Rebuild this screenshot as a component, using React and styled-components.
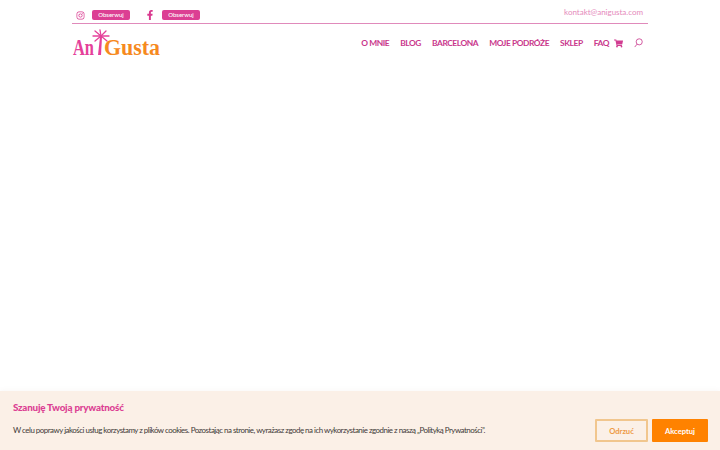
import React from "react";
import styled, { createGlobalStyle } from "styled-components";
import { FaInstagram, FaFacebookF, FaShoppingCart } from "react-icons/fa";

const Global = createGlobalStyle`
  html, body { margin: 0; padding: 0; background: #fff; }
  body { font-family: "Lato", "Liberation Sans", sans-serif; }
  * { box-sizing: border-box; }
`;

const Page = styled.div`
  width: 720px;
  height: 450px;
  display: flex;
  flex-direction: column;
  justify-content: space-between;
  overflow: hidden;
`;
const Header = styled.header`
  width: 576px;
  margin: 0 auto;
`;
const TopBar = styled.div`
  height: 24px;
  border-bottom: 1px solid #e08abb;
  display: flex;
  align-items: center;
  padding: 0 5px 0 0;
`;
const SocialIcon = styled.span`
  width: 16px;
  height: 16px;
  margin-top: 7px;
  display: flex;
  align-items: center;
  justify-content: center;
  color: #d9398f;
  font-size: ${(p) => p.$size}px;
`;
const Follow = styled.span`
  width: 38px;
  height: 10px;
  margin: 7px ${(p) => p.$right}px 0 ${(p) => p.$left}px;
  border-radius: 2px;
  background: #dc3f93;
  color: #fff;
  font-size: 6px;
  line-height: 10px;
  text-align: center;
  font-weight: 500;
`;
const Email = styled.a`
  margin-left: auto;
  margin-top: 0;
  color: #e58abb;
  font-size: 8px;
  letter-spacing: -0.02px;
`;
const MainRow = styled.div`
  display: flex;
  align-items: flex-start;
  justify-content: space-between;
  height: 34px;
`;
const Logo = styled.svg`
  width: 100px;
  height: 30px;
  margin-top: 5px;
  display: block;
`;
const Nav = styled.nav`
  display: flex;
  align-items: center;
  margin-top: 13px;
  padding-right: 5px;
`;
const NavItem = styled.a`
  color: #c9378c;
  font-size: 8.4px;
  font-weight: 700;
  line-height: 12px;
  letter-spacing: -0.43px;
  margin-right: ${(p) => p.$gap}px;
  white-space: nowrap;
`;
const CartIcon = styled(FaShoppingCart)`
  width: 9px;
  height: 9px;
  color: #d13c91;
  margin-right: 11px;
`;
const SearchIcon = styled.svg`
  width: 9px;
  height: 10px;
  display: block;
`;
const Cookie = styled.section`
  height: 59px;
  background: #fbf0e7;
  box-shadow: 0 0 6px rgba(120, 90, 60, 0.06);
  padding: 0 12px 0 13px;
  display: flex;
  justify-content: space-between;
`;
const CookieText = styled.div`
  display: flex;
  flex-direction: column;
  min-width: 0;
`;
const CookieTitle = styled.h2`
  margin: 10px 0 0;
  color: #dc3f93;
  font-size: 9.8px;
  line-height: 13px;
  font-weight: 900;
  letter-spacing: -0.2px;
`;
const CookieBody = styled.p`
  margin: 10px 0 0;
  color: #3f3a38;
  font-size: 7.9px;
  line-height: 13px;
  letter-spacing: -0.48px;
  white-space: nowrap;
`;
const Actions = styled.div`
  display: flex;
  gap: 4px;
  margin-top: 28px;
  align-items: flex-start;
`;
const Btn = styled.button`
  height: 23px;
  width: ${(p) => p.$w}px;
  padding: 0;
  border-radius: 1px;
  border: 2px solid ${(p) => (p.$solid ? "#ff8200" : "#f1c68e")};
  background: ${(p) => (p.$solid ? "#ff8200" : "transparent")};
  color: ${(p) => (p.$solid ? "#fff" : "#ee9a45")};
  font-family: "Lato", sans-serif;
  font-size: 7.6px;
  font-weight: 700;
`;

const nav = [
  ["O MNIE", 11],
  ["BLOG", 11],
  ["BARCELONA", 11],
  ["MOJE PODRÓŻE", 11],
  ["SKLEP", 11],
  ["FAQ", 5],
];

export default function App() {
  return (
    <Page>
      <Global />
      <Header>
        <TopBar>
          <SocialIcon $size={9}><FaInstagram /></SocialIcon>
          <Follow $left={4} $right={12}>Obserwuj</Follow>
          <SocialIcon $size={10}><FaFacebookF /></SocialIcon>
          <Follow $left={4} $right={0}>Obserwuj</Follow>
          <Email>kontakt@anigusta.com</Email>
        </TopBar>
        <MainRow>
          <Logo viewBox="0 0 100 30">
            <g stroke="#e5409a" strokeWidth="1.3" strokeLinecap="round" fill="none">
              <path d="M29 7 L23 2" />
              <path d="M29 7 L28 1" />
              <path d="M29 7 L34 2" />
              <path d="M29 7 L21 7" />
              <path d="M29 7 L37 7" />
              <path d="M29 7 L23 12" />
              <path d="M29 7 L35 12" />
            </g>
            <path d="M28 8h2l-1 18h-3z" fill="#e5409a" />
            <text x="1" y="26" fontFamily="Liberation Serif" fontWeight="700" fontSize="24" fill="#e5409a" textLength="21" lengthAdjust="spacingAndGlyphs">An</text>
            <text x="32" y="26" fontFamily="Liberation Serif" fontWeight="700" fontSize="24" fill="#f68a1e" textLength="56" lengthAdjust="spacingAndGlyphs">Gusta</text>
          </Logo>
          <Nav>
            {nav.map(([t, g]) => (
              <NavItem key={t} $gap={g}>{t}</NavItem>
            ))}
            <CartIcon />
            <SearchIcon viewBox="0 0 10 11">
              <circle cx="5.8" cy="4.2" r="3.4" fill="none" stroke="#c9378c" strokeWidth="0.9" />
              <path d="M3.4 6.8 L0.8 10" stroke="#c9378c" strokeWidth="0.9" />
            </SearchIcon>
          </Nav>
        </MainRow>
      </Header>
      <Cookie>
        <CookieText>
          <CookieTitle>Szanuję Twoją prywatność</CookieTitle>
          <CookieBody>W celu poprawy jakości usług korzystamy z plików cookies. Pozostając na stronie, wyrażasz zgodę na ich wykorzystanie zgodnie z naszą „Polityką Prywatności”.</CookieBody>
        </CookieText>
        <Actions>
          <Btn $w={53}>Odrzuć</Btn>
          <Btn $w={56} $solid>Akceptuj</Btn>
        </Actions>
      </Cookie>
    </Page>
  );
}
